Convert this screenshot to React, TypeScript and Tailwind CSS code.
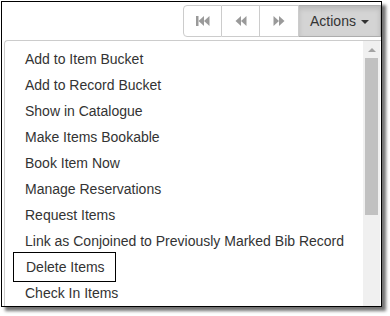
import React from "react";

const items = [
  "Add to Item Bucket",
  "Add to Record Bucket",
  "Show in Catalogue",
  "Make Items Bookable",
  "Book Item Now",
  "Manage Reservations",
  "Request Items",
  "Link as Conjoined to Previously Marked Bib Record",
  "Delete Items",
  "Check In Items",
];

function FastBack() {
  return (
    <svg width="14" height="10" viewBox="0 0 14 10">
      <rect x="0" y="0" width="2.5" height="10" fill="#9a9a9a" />
      <polygon points="2.5,5 8,0 8,10" fill="#9a9a9a" />
      <polygon points="8,5 13.5,0 13.5,10" fill="#9a9a9a" />
    </svg>
  );
}
function Back() {
  return (
    <svg width="12" height="10" viewBox="0 0 12 10">
      <polygon points="0.5,5 6,0 6,10" fill="#9a9a9a" />
      <polygon points="6,5 11.5,0 11.5,10" fill="#9a9a9a" />
    </svg>
  );
}
function Fwd() {
  return (
    <svg width="12" height="10" viewBox="0 0 12 10">
      <polygon points="0.5,0 6,5 0.5,10" fill="#9a9a9a" />
      <polygon points="6,0 11.5,5 6,10" fill="#9a9a9a" />
    </svg>
  );
}

export default function App() {
  return (
    <div
      className="w-[390px] h-[316px] bg-white pl-[1px] pt-[1px]"
      style={{ fontFamily: '"Liberation Sans", Arial, sans-serif' }}
    >
      <div className="w-[381px] h-[306px] border border-black bg-white overflow-hidden shadow-[4px_4px_3px_rgba(0,0,0,0.55)] flex flex-col">
        <div className="flex justify-end pt-[3px] h-[38px]">
          <div className="flex h-[32px]">
            <div className="w-[39px] border border-[#ccc] rounded-l-[4px] flex items-center justify-center bg-white">
              <FastBack />
            </div>
            <div className="w-[38px] border-y border-r border-[#ccc] flex items-center justify-center bg-white">
              <Back />
            </div>
            <div className="w-[39px] border-y border-r border-[#ccc] flex items-center justify-center bg-white">
              <Fwd />
            </div>
            <div className="w-[82px] border border-l-0 border-[#adadad] bg-[#d4d4d4] flex items-center justify-center gap-[5px] text-[14px] text-[#333] shadow-[inset_0_3px_5px_rgba(0,0,0,0.125)]">
              <span>Actions</span>
              <span className="w-0 h-0 border-l-[4px] border-r-[4px] border-t-[4px] border-l-transparent border-r-transparent border-t-[#333] mt-[1px]" />
            </div>
          </div>
        </div>
        <div className="flex-1 flex ml-[2px] mt-[1px] border-l border-t border-[#ccc] rounded-tl-[4px] bg-white">
          <div className="flex-1 pt-[5px]">
            {items.map((t) => (
              <div key={t} className="h-[26px] flex items-center">
                {t === "Delete Items" ? (
                  <div className="ml-[8px] border border-black h-[30px] w-[103px] flex items-center pl-[12px] text-[14px] text-[#333]">
                    {t}
                  </div>
                ) : (
                  <div className="pl-[20px] text-[14px] text-[#333] whitespace-nowrap">{t}</div>
                )}
              </div>
            ))}
          </div>
          <div className="w-[17px] bg-[#f0f0f0] flex flex-col items-center mr-[1px]">
            <div className="h-[17px] w-full flex items-center justify-center">
              <span className="w-0 h-0 border-l-[4px] border-r-[4px] border-b-[4px] border-l-transparent border-r-transparent border-b-[#a3a3a3]" />
            </div>
            <div className="w-[13px] h-[157px] bg-[#c1c1c1]" />
          </div>
        </div>
      </div>
    </div>
  );
}
